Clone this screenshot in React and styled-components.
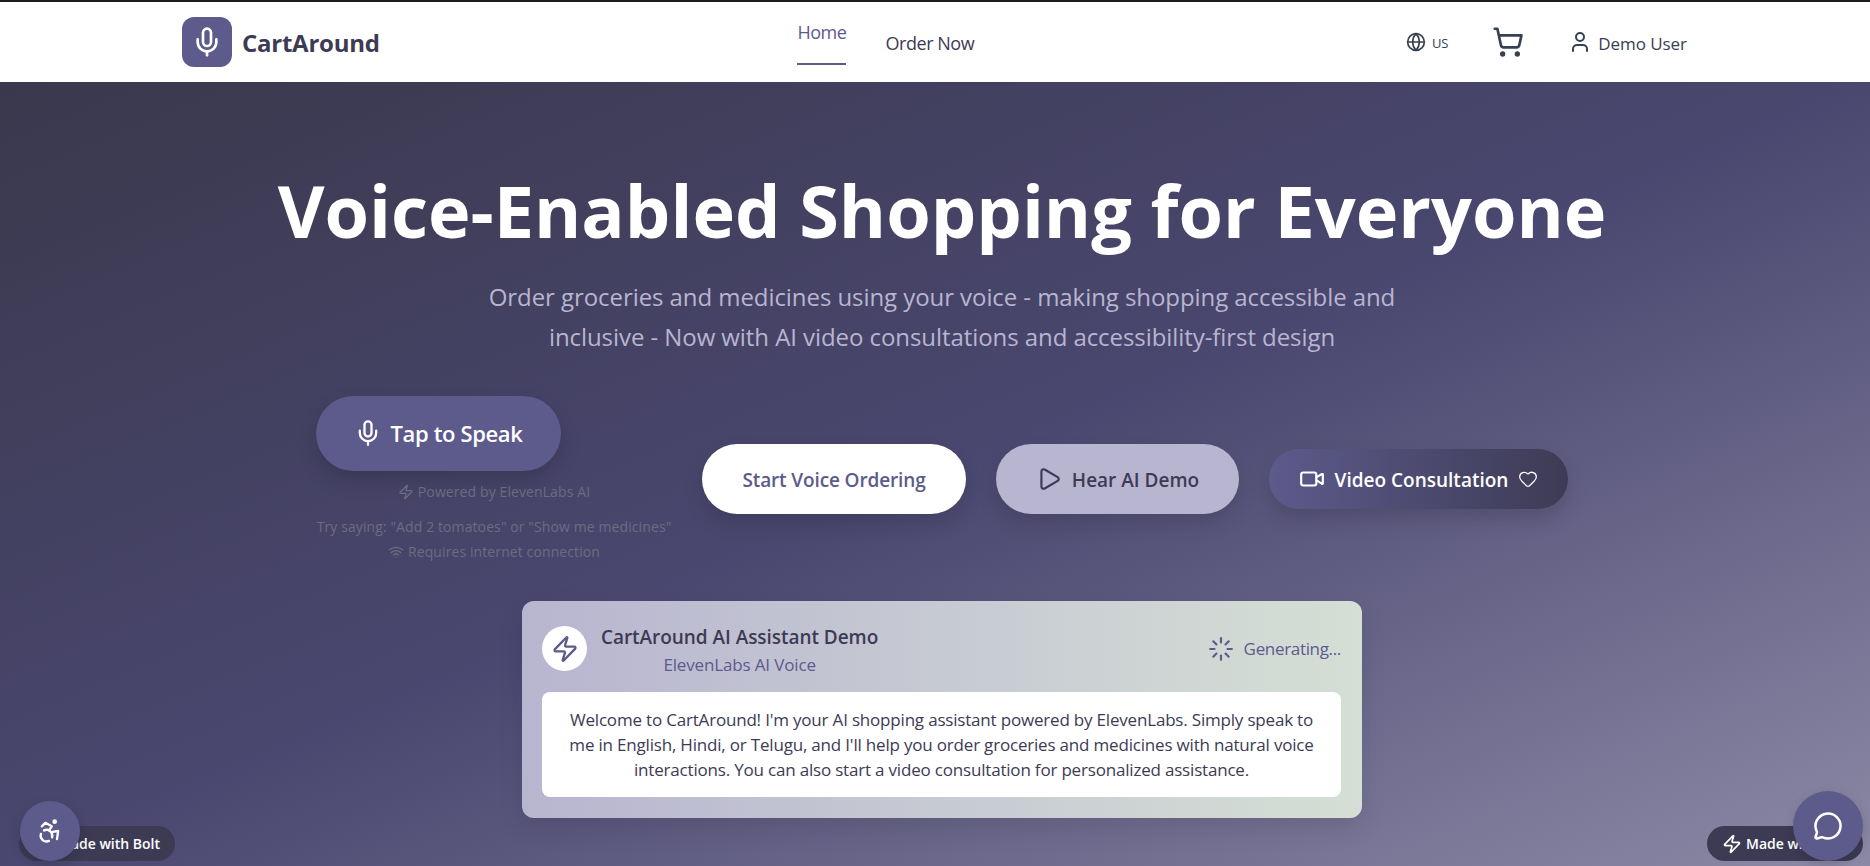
import React from "react";
import styled, { createGlobalStyle } from "styled-components";
import {
  Mic,
  Globe,
  ShoppingCart,
  User,
  Zap,
  Wifi,
  Play,
  Video,
  Heart,
  Loader,
  MessageCircle,
  Accessibility,
} from "lucide-react";

const GlobalStyle = createGlobalStyle`
  html, body {
    margin: 0;
    height: 100%;
    overflow: hidden;
    font-family: "Open Sans", "Noto Sans", sans-serif;
    background: #fff;
  }
  * { box-sizing: border-box; }
`;

const App = () => {
  return (
    <Page>
      <GlobalStyle />
      <Navbar>
        <Brand>
          <LogoTile>
            <Mic size={32} color="#fff" strokeWidth={2} />
          </LogoTile>
          <BrandName>CartAround</BrandName>
        </Brand>
        <NavLinks>
          <HomeLink>Home</HomeLink>
          <NavLink>Order Now</NavLink>
        </NavLinks>
        <NavTools>
          <Lang>
            <Globe size={20} strokeWidth={2} />
            <LangCode>US</LangCode>
          </Lang>
          <ShoppingCart size={32} strokeWidth={2} color="#374151" />
          <UserChip>
            <User size={24} strokeWidth={2} />
            <UserName>Demo User</UserName>
          </UserChip>
        </NavTools>
      </Navbar>

      <Hero>
        <Title>Voice-Enabled Shopping for Everyone</Title>
        <Subtitle>
          Order groceries and medicines using your voice - making shopping accessible and
          <br />
          inclusive - Now with AI video consultations and accessibility-first design
        </Subtitle>

        <Actions>
          <SpeakColumn>
            <SpeakButton>
              <Mic size={28} strokeWidth={2} />
              Tap to Speak
            </SpeakButton>
            <Note $top={11}>
              <Zap size={16} strokeWidth={2} />
              Powered by ElevenLabs AI
            </Note>
            <Note $top={15}>Try saying: "Add 2 tomatoes" or "Show me medicines"</Note>
            <Note $top={5}>
              <Wifi size={16} strokeWidth={2} />
              Requires internet connection
            </Note>
          </SpeakColumn>
          <WhiteButton>Start Voice Ordering</WhiteButton>
          <LilacButton>
            <Play size={26} strokeWidth={2} />
            <ButtonLabel>Hear AI Demo</ButtonLabel>
          </LilacButton>
          <VideoButton>
            <Video size={26} strokeWidth={2} />
            <ButtonLabel>Video Consultation</ButtonLabel>
            <Heart size={20} strokeWidth={1.5} />
          </VideoButton>
        </Actions>

        <DemoCard>
          <DemoHeader>
            <DemoIdentity>
              <ZapCircle>
                <Zap size={28} strokeWidth={2} color="#5d5a8c" />
              </ZapCircle>
              <DemoTitles>
                <DemoTitle>CartAround AI Assistant Demo</DemoTitle>
                <DemoSub>ElevenLabs AI Voice</DemoSub>
              </DemoTitles>
            </DemoIdentity>
            <Status>
              <Loader size={26} strokeWidth={2} />
              Generating...
            </Status>
          </DemoHeader>
          <DemoText>
            Welcome to CartAround! I'm your AI shopping assistant powered by ElevenLabs. Simply speak to
            <br />
            me in English, Hindi, or Telugu, and I'll help you order groceries and medicines with natural voice
            <br />
            interactions. You can also start a video consultation for personalized assistance.
          </DemoText>
        </DemoCard>
      </Hero>

      <BoltBadge $side="left">
        <Zap size={20} strokeWidth={2} />
        Made with Bolt
      </BoltBadge>
      <BoltBadge $side="right">
        <Zap size={20} strokeWidth={2} />
        Made with Bolt
      </BoltBadge>
      <RoundButton $side="left" $size={60}>
        <Accessibility size={28} strokeWidth={2} />
      </RoundButton>
      <RoundButton $side="right" $size={70}>
        <MessageCircle size={30} strokeWidth={2} />
      </RoundButton>
    </Page>
  );
};

const Page = styled.div`
  height: 866px;
  overflow: hidden;
  position: relative;
  display: flex;
  flex-direction: column;
`;

const Navbar = styled.header`
  height: 82px;
  flex: none;
  border-top: 2px solid #1c1c1c;
  background: #fff;
  padding: 0 183px 0 182px;
  display: flex;
  align-items: center;
  justify-content: space-between;
`;

const Brand = styled.div`
  display: flex;
  align-items: center;
  gap: 10px;
`;

const LogoTile = styled.div`
  width: 50px;
  height: 50px;
  border-radius: 12px;
  background: #5d5a8c;
  display: flex;
  align-items: center;
  justify-content: center;
`;

const BrandName = styled.span`
  margin-top: 1px;
  font-size: 24px;
  font-weight: 700;
  color: #3d3b54;
  letter-spacing: -0.25px;
`;

const NavLinks = styled.nav`
  display: flex;
  align-items: center;
  gap: 39px;
  margin-right: 14px;
`;

const NavLink = styled.a`
  margin-top: 2px;
  font-size: 18px;
  font-weight: 500;
  line-height: 24px;
  color: #3d3b54;
  letter-spacing: -0.45px;
`;

const HomeLink = styled(NavLink)`
  margin-top: 0;
  color: #5d5a8c;
  padding-bottom: 19px;
  border-bottom: 2px solid #5d5a8c;
`;

const NavTools = styled.div`
  display: flex;
  align-items: center;
  gap: 44px;
  color: #374151;
`;

const Lang = styled.div`
  display: flex;
  align-items: center;
  gap: 6px;
`;

const LangCode = styled.span`
  font-size: 13px;
  margin-top: 2px;
  letter-spacing: -0.2px;
`;

const UserChip = styled.div`
  display: flex;
  align-items: center;
  gap: 6px;
`;

const UserName = styled.span`
  margin-top: 3px;
  font-size: 17px;
  font-weight: 500;
  letter-spacing: -0.05px;
`;

const Hero = styled.main`
  flex: 1;
  padding: 80px 0 0 14px;
  background: linear-gradient(to bottom right, #3a384c 0%, #4a4770 50%, #8c89a6 100%);
  display: flex;
  flex-direction: column;
  align-items: center;
`;

const Title = styled.h1`
  margin: 0;
  font-size: 72px;
  line-height: 96px;
  font-weight: 700;
  color: #fff;
  text-align: center;
`;

const Subtitle = styled.p`
  margin: 19px 0 0;
  font-size: 24px;
  line-height: 40px;
  color: #b8b5d0;
  text-align: center;
  letter-spacing: -0.07px;
`;

const Actions = styled.div`
  margin-top: 39px;
  display: flex;
  align-items: center;
  justify-content: center;
  gap: 30px;
`;

const SpeakColumn = styled.div`
  width: 356px;
  display: flex;
  flex-direction: column;
  align-items: center;
`;

const BaseButton = styled.button`
  border: none;
  display: inline-flex;
  align-items: center;
  justify-content: center;
  font-family: inherit;
  font-weight: 600;
  border-radius: 999px;
`;

const ButtonLabel = styled.span`
  margin-top: 2px;
`;

const SpeakButton = styled(BaseButton)`
  align-self: flex-start;
  width: 245px;
  height: 75px;
  padding-bottom: 2px;
  gap: 8px;
  background: #5d5a8c;
  color: #fff;
  font-size: 22px;
  letter-spacing: -0.35px;
  box-shadow: 0 10px 20px rgba(0, 0, 0, 0.15);
`;

const Note = styled.div`
  margin-top: ${props => props.$top}px;
  display: flex;
  align-items: center;
  gap: 4px;
  font-size: 14px;
  line-height: 20px;
  color: #6b6c80;
  white-space: nowrap;
  letter-spacing: 0.1px;
`;

const WhiteButton = styled(BaseButton)`
  width: 264px;
  height: 70px;
  padding-top: 2px;
  background: #fff;
  color: #5d5a8c;
  font-size: 19px;
  letter-spacing: -0.13px;
  box-shadow: 0 10px 20px rgba(0, 0, 0, 0.12);
`;

const LilacButton = styled(BaseButton)`
  width: 243px;
  height: 70px;
  gap: 10px;
  background: #b8b5d0;
  color: #3d3b54;
  font-size: 19px;
  box-shadow: 0 10px 20px rgba(0, 0, 0, 0.12);
`;

const VideoButton = styled(BaseButton)`
  width: 299px;
  height: 60px;
  gap: 10px;
  background: linear-gradient(90deg, #5d5a8c, #3d3b54);
  color: #fff;
  font-size: 19px;
  box-shadow: 0 10px 20px rgba(0, 0, 0, 0.15);
`;

const DemoCard = styled.section`
  margin-top: 39px;
  width: 840px;
  height: 217px;
  padding: 25px 21px 21px 20px;
  border-radius: 12px;
  background: linear-gradient(90deg, #b8b5d0, #d5dfd5);
  box-shadow: 0 10px 25px rgba(0, 0, 0, 0.1);
`;

const DemoHeader = styled.div`
  display: flex;
  align-items: flex-start;
  justify-content: space-between;
  height: 66px;
`;

const DemoIdentity = styled.div`
  display: flex;
  gap: 14px;
`;

const ZapCircle = styled.div`
  width: 45px;
  height: 45px;
  border-radius: 50%;
  background: #fff;
  display: flex;
  align-items: center;
  justify-content: center;
`;

const DemoTitles = styled.div`
  text-align: center;
  margin-top: -2px;
`;

const DemoTitle = styled.div`
  font-size: 19px;
  line-height: 27px;
  font-weight: 600;
  color: #3d3b54;
  letter-spacing: -0.05px;
`;

const DemoSub = styled.div`
  font-size: 17px;
  line-height: 27px;
  color: #5d5a8c;
  letter-spacing: -0.15px;
`;

const Status = styled.div`
  display: flex;
  align-items: center;
  gap: 10px;
  height: 45px;
  padding-right: 0;
  font-size: 17px;
  color: #5d5a8c;
  letter-spacing: -0.33px;
`;

const DemoText = styled.p`
  margin: 0;
  height: 105px;
  padding: 15px 0;
  background: #fff;
  border-radius: 8px;
  font-size: 17px;
  line-height: 25px;
  text-align: center;
  color: #3d3b54;
  letter-spacing: -0.19px;
  white-space: nowrap;
`;

const BoltBadge = styled.div`
  position: absolute;
  bottom: 5px;
  ${props => (props.$side === "left" ? "left: 19px;" : "right: 7px;")}
  width: 156px;
  height: 35px;
  padding-left: 15px;
  border-radius: 18px;
  background: #3d3b54;
  color: #fff;
  display: flex;
  align-items: center;
  gap: 4px;
  font-size: 14px;
  font-weight: 600;
  white-space: nowrap;
`;

const RoundButton = styled.button`
  position: absolute;
  bottom: 5px;
  ${props => (props.$side === "left" ? "left: 20px;" : "right: 7px;")}
  width: ${props => props.$size}px;
  height: ${props => props.$size}px;
  border: none;
  border-radius: 50%;
  background: #5d5a8c;
  color: #fff;
  display: flex;
  align-items: center;
  justify-content: center;
  box-shadow: 0 4px 12px rgba(0, 0, 0, 0.15);
`;

export default App;
